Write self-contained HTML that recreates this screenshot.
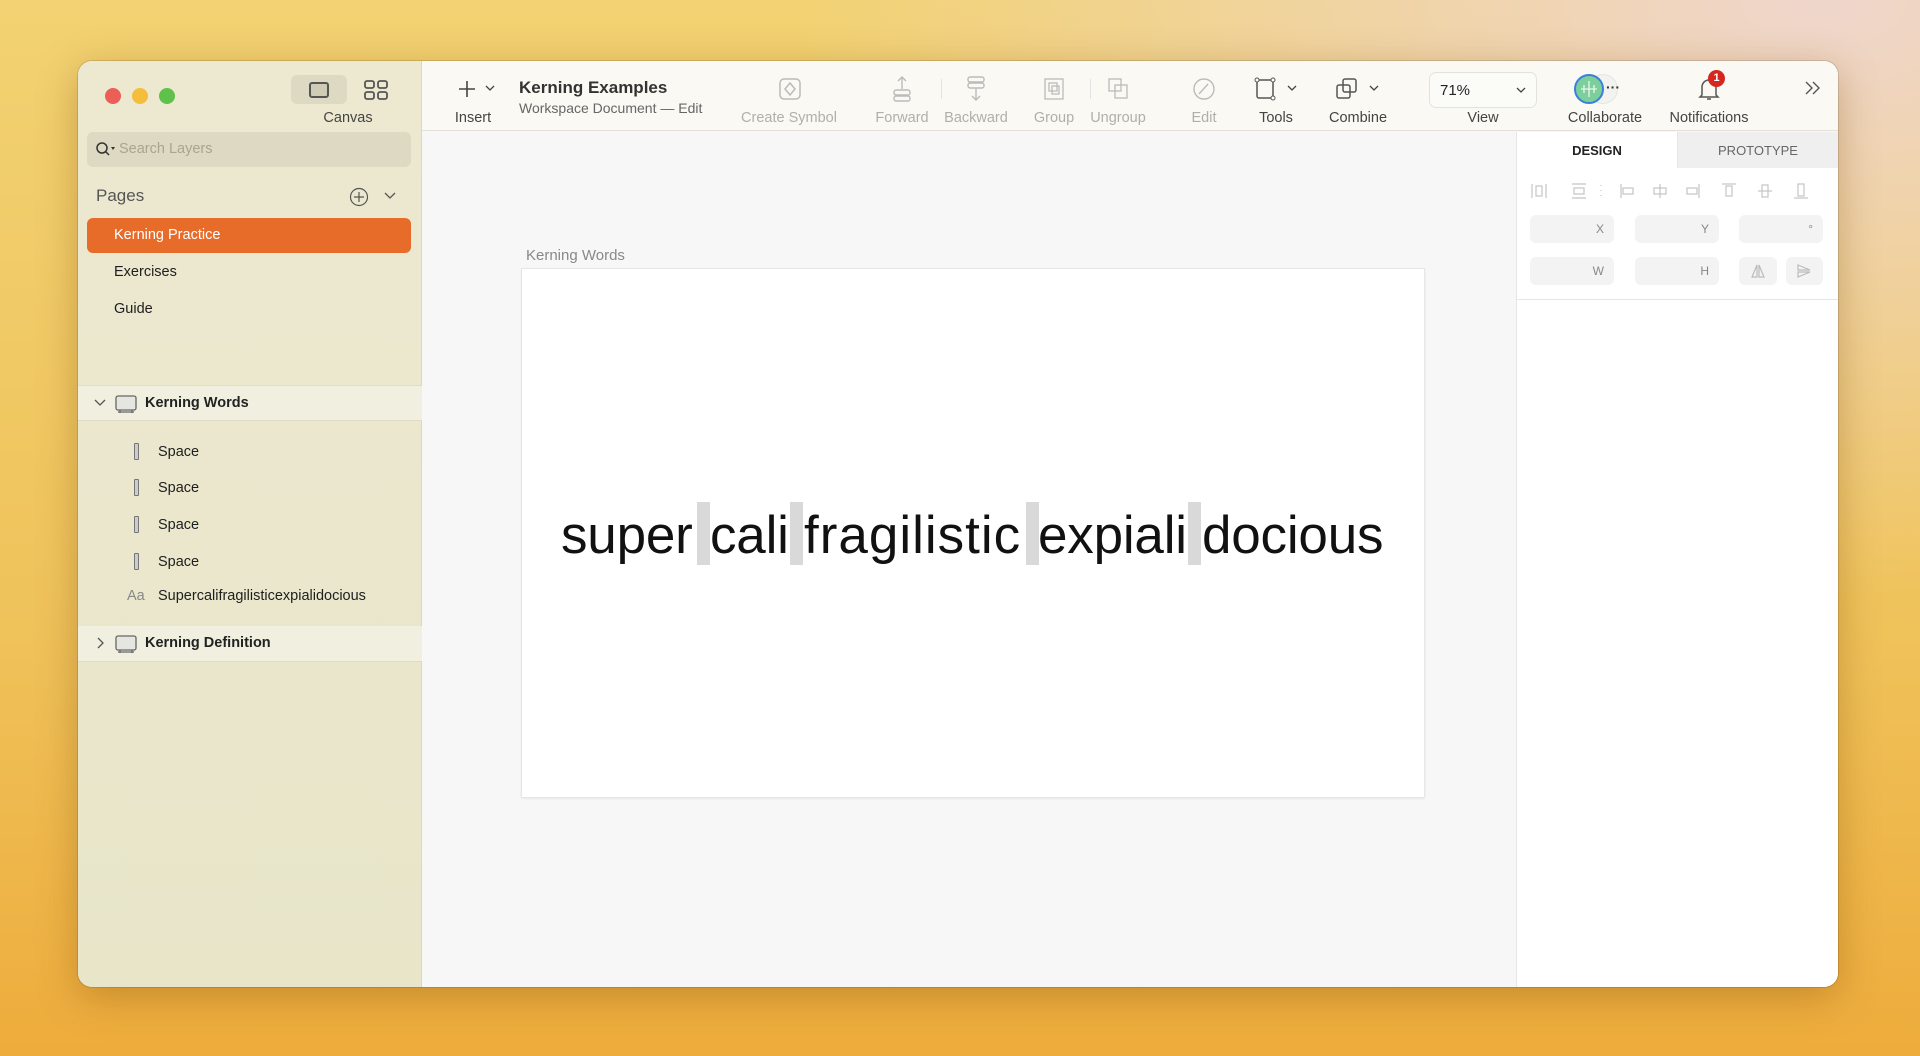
<!DOCTYPE html>
<html><head><meta charset="utf-8"><style>
*{margin:0;padding:0;box-sizing:border-box}
body{width:1920px;height:1056px;overflow:hidden;font-family:"Liberation Sans",sans-serif;position:relative;
background:radial-gradient(ellipse at 95% 0%,#efd6cc 0%,rgba(239,214,204,0) 40%),linear-gradient(180deg,#f2d272 0%,#efc25a 60%,#eeac3c 100%);}
.a{position:absolute}
.win{left:78px;top:61px;width:1760px;height:926px;border-radius:14px;overflow:hidden;background:#f7f7f7;box-shadow:0 10px 40px rgba(120,70,0,.35),0 0 0 1px rgba(0,0,0,.12)}
.side{left:0;top:0;width:344px;height:926px;background:linear-gradient(180deg,#ede9d1,#e8e5c9);border-right:1px solid #dcd8c0}
.tb{left:344px;top:0;width:1416px;height:70px;background:#faf9f3;border-bottom:1px solid #e2e0d8}
.t{font-size:14.5px;color:#222;white-space:nowrap}
.lbl{font-size:14.5px;color:#444;white-space:nowrap;transform:translateX(-50%)}
.dis{color:#b0b0aa}
.tl{width:16px;height:16px;border-radius:50%;top:27px}
.row{font-size:14.5px;color:#1e1e1e;white-space:nowrap}
.sp{width:5px;height:17px;border:1.5px solid #777;border-radius:1px;background:#ccc}
.inp{background:#f3f3f3;border-radius:6px;height:28px;font-size:12px;color:#888;text-align:right;padding:7px 10px 0 0}
.bar{background:#d9d9d9;width:13px;height:63px;top:233px}
.w{font-size:53px;color:#111;top:236px;letter-spacing:-0.2px;line-height:62px}
</style></head><body>
<div class="a win">
 <div class="a side">
  <div class="a tl" style="left:27px;background:#ec5f57"></div>
  <div class="a tl" style="left:54px;background:#f4bd3c"></div>
  <div class="a tl" style="left:81px;background:#5ec14a"></div>
  <div class="a" style="left:213px;top:14px;width:56px;height:29px;background:#ddd9c2;border-radius:6px"></div>
  <div class="a" style="left:231px;top:21px;width:20px;height:16px;border:2px solid #555;border-radius:3px;background:#cfcbb5"></div>
  <svg class="a" style="left:286px;top:19px" width="24" height="20"><g fill="none" stroke="#555" stroke-width="1.8"><rect x="1" y="1" width="9" height="7" rx="2"/><rect x="14" y="1" width="9" height="7" rx="2"/><rect x="1" y="12" width="9" height="7" rx="2"/><rect x="14" y="12" width="9" height="7" rx="2"/></g></svg>
  <div class="a lbl" style="left:270px;top:49px">Canvas</div>
  <div class="a" style="left:9px;top:71px;width:324px;height:35px;background:#ddd9c3;border-radius:6px"></div>
  <svg class="a" style="left:17px;top:80px" width="22" height="16"><circle cx="7" cy="7" r="5" fill="none" stroke="#333" stroke-width="1.5"/><line x1="10.5" y1="10.5" x2="14" y2="14" stroke="#333" stroke-width="1.5"/><path d="M16 6l4 0-2 3z" fill="#333"/></svg>
  <div class="a t" style="left:41px;top:80px;color:#a9a690">Search Layers</div>
  <div class="a" style="left:18px;top:125px;font-size:17px;color:#555">Pages</div>
  <svg class="a" style="left:271px;top:126px" width="20" height="20"><circle cx="10" cy="10" r="8.5" fill="none" stroke="#555" stroke-width="1.2"/><path d="M10 5v10M5 10h10" stroke="#555" stroke-width="1.2"/></svg>
  <svg class="a" style="left:306px;top:130px" width="12" height="10"><path d="M1 2l5 5 5-5" fill="none" stroke="#555" stroke-width="1.3"/></svg>
  <div class="a" style="left:9px;top:157px;width:324px;height:35px;background:#e76b29;border-radius:6px"></div>
  <div class="a row" style="left:36px;top:166px;color:#fff">Kerning Practice</div>
  <div class="a row" style="left:36px;top:203px">Exercises</div>
  <div class="a row" style="left:36px;top:240px">Guide</div>
  <div class="a" style="left:0;top:324px;width:344px;height:36px;background:#f1efe0;border-top:1px solid #e0ddca;border-bottom:1px solid #dedbc6"></div>
  <svg class="a" style="left:16px;top:337px" width="12" height="10"><path d="M1 2l5 5 5-5" fill="none" stroke="#555" stroke-width="1.3"/></svg>
  <svg class="a" style="left:36px;top:332px" width="24" height="22"><rect x="2" y="3" width="20" height="14" rx="2" fill="#e6e6e0" stroke="#666" stroke-width="1.3"/><path d="M6 17v3M18 17v3M4 19h16" stroke="#666" stroke-width="1.2"/></svg>
  <div class="a row" style="left:67px;top:334px;font-weight:bold;color:#222">Kerning Words</div>
  <div class="a sp" style="left:56px;top:382px"></div><div class="a row" style="left:80px;top:383px">Space</div>
  <div class="a sp" style="left:56px;top:418px"></div><div class="a row" style="left:80px;top:419px">Space</div>
  <div class="a sp" style="left:56px;top:455px"></div><div class="a row" style="left:80px;top:456px">Space</div>
  <div class="a sp" style="left:56px;top:492px"></div><div class="a row" style="left:80px;top:493px">Space</div>
  <div class="a row" style="left:49px;top:527px;color:#888">Aa</div><div class="a row" style="left:80px;top:527px">Supercalifragilisticexpialidocious</div>
  <div class="a" style="left:0;top:565px;width:344px;height:36px;background:#f1efe0;border-bottom:1px solid #dedbc6"></div>
  <svg class="a" style="left:18px;top:576px" width="10" height="12"><path d="M2 1l5 5-5 5" fill="none" stroke="#555" stroke-width="1.3"/></svg>
  <svg class="a" style="left:36px;top:572px" width="24" height="22"><rect x="2" y="3" width="20" height="14" rx="2" fill="#e6e6e0" stroke="#666" stroke-width="1.3"/><path d="M6 17v3M18 17v3M4 19h16" stroke="#666" stroke-width="1.2"/></svg>
  <div class="a row" style="left:67px;top:574px;font-weight:bold;color:#222">Kerning Definition</div>
 </div>
 <div class="a tb">
  <svg class="a" style="left:35px;top:18px" width="20" height="20"><path d="M10 2v16M2 10h16" stroke="#444" stroke-width="1.6"/></svg>
  <svg class="a" style="left:63px;top:24px" width="10" height="8"><path d="M1 1l4 4 4-4" fill="none" stroke="#444" stroke-width="1.3"/></svg>
  <div class="a lbl" style="left:51px;top:49px">Insert</div>
  <div class="a" style="left:97px;top:17px;font-size:17px;font-weight:bold;color:#333">Kerning Examples</div>
  <div class="a t" style="left:97px;top:39px;color:#666;font-size:14px">Workspace Document — Edit</div>
  <svg class="a" style="left:356px;top:16px" width="24" height="24"><rect x="2" y="2" width="20" height="20" rx="4" fill="none" stroke="#bbb" stroke-width="1.5"/><path d="M12 6l5 6-5 6-5-6z" fill="none" stroke="#bbb" stroke-width="1.5"/></svg>
  <div class="a lbl dis" style="left:367px;top:49px">Create Symbol</div>
  <svg class="a" style="left:469px;top:14px" width="22" height="28"><path d="M11 2v12M7 6l4-4 4 4" fill="none" stroke="#bbb" stroke-width="1.4"/><rect x="3" y="15" width="16" height="5" rx="2" fill="none" stroke="#bbb" stroke-width="1.4"/><rect x="3" y="21" width="16" height="5" rx="2" fill="none" stroke="#bbb" stroke-width="1.4"/></svg>
  <div class="a" style="left:519px;top:18px;width:1px;height:20px;background:#e3e3e3"></div>
  <div class="a lbl dis" style="left:480px;top:49px">Forward</div>
  <svg class="a" style="left:543px;top:14px" width="22" height="28"><rect x="3" y="2" width="16" height="5" rx="2" fill="none" stroke="#bbb" stroke-width="1.4"/><rect x="3" y="8" width="16" height="5" rx="2" fill="none" stroke="#bbb" stroke-width="1.4"/><path d="M11 13v12M7 21l4 4 4-4" fill="none" stroke="#bbb" stroke-width="1.4"/></svg>
  <div class="a lbl dis" style="left:554px;top:49px">Backward</div>
  <svg class="a" style="left:620px;top:15px" width="24" height="26"><rect x="3" y="3" width="18" height="20" fill="none" stroke="#bbb" stroke-width="1.3"/><rect x="7" y="7" width="8" height="8" fill="none" stroke="#bbb" stroke-width="1.3"/><rect x="10" y="10" width="7" height="8" fill="none" stroke="#bbb" stroke-width="1.3"/></svg>
  <div class="a lbl dis" style="left:632px;top:49px">Group</div>
  <div class="a" style="left:668px;top:18px;width:1px;height:20px;background:#e3e3e3"></div>
  <svg class="a" style="left:684px;top:15px" width="24" height="26"><rect x="3" y="3" width="12" height="12" fill="none" stroke="#bbb" stroke-width="1.3"/><rect x="9" y="9" width="12" height="13" fill="none" stroke="#bbb" stroke-width="1.3"/></svg>
  <div class="a lbl dis" style="left:696px;top:49px">Ungroup</div>
  <svg class="a" style="left:770px;top:16px" width="24" height="24"><circle cx="12" cy="12" r="10" fill="none" stroke="#bbb" stroke-width="1.4"/><path d="M7 17l9-10" stroke="#bbb" stroke-width="1.4"/></svg>
  <div class="a lbl dis" style="left:782px;top:49px">Edit</div>
  <svg class="a" style="left:831px;top:15px" width="26" height="26"><rect x="4" y="4" width="16" height="18" rx="2" fill="none" stroke="#555" stroke-width="1.5"/><circle cx="4" cy="4" r="2" fill="#fff" stroke="#555"/><circle cx="20" cy="4" r="2" fill="#fff" stroke="#555"/><circle cx="20" cy="22" r="2" fill="#fff" stroke="#555"/></svg>
  <svg class="a" style="left:865px;top:24px" width="10" height="8"><path d="M1 1l4 4 4-4" fill="none" stroke="#444" stroke-width="1.3"/></svg>
  <div class="a lbl" style="left:854px;top:49px">Tools</div>
  <svg class="a" style="left:912px;top:15px" width="26" height="26"><rect x="3" y="9" width="13" height="13" rx="2" fill="none" stroke="#555" stroke-width="1.5"/><rect x="9" y="3" width="13" height="13" rx="2" fill="none" stroke="#555" stroke-width="1.5"/></svg>
  <svg class="a" style="left:947px;top:24px" width="10" height="8"><path d="M1 1l4 4 4-4" fill="none" stroke="#444" stroke-width="1.3"/></svg>
  <div class="a lbl" style="left:936px;top:49px">Combine</div>
  <div class="a" style="left:1007px;top:11px;width:108px;height:36px;border:1px solid #e3e3de;border-radius:7px;background:#fbfbf7"></div>
  <div class="a t" style="left:1018px;top:21px;font-size:15px">71%</div>
  <svg class="a" style="left:1094px;top:26px" width="10" height="8"><path d="M1 1l4 4 4-4" fill="none" stroke="#444" stroke-width="1.3"/></svg>
  <div class="a lbl" style="left:1061px;top:49px">View</div>
  <div class="a" style="left:1166px;top:13px;width:30px;height:30px;border-radius:50%;background:#f2f2ee;border:1px solid #e5e5e5"></div>
  <div class="a" style="left:1152px;top:13px;width:30px;height:30px;border-radius:50%;background:#7ccf9a;border:2px solid #3a7fdc"></div>
  <svg class="a" style="left:1158px;top:19px" width="18" height="18"><path d="M9 1v16M4 5v8M14 5v8M1 9h16" stroke="#e8f7ee" stroke-width="1.3"/></svg>
  <div class="a" style="left:1184px;top:18px;font-size:14px;color:#333;font-weight:bold">···</div>
  <div class="a lbl" style="left:1183px;top:49px">Collaborate</div>
  <svg class="a" style="left:1274px;top:15px" width="26" height="26"><path d="M6 19V11a7 7 0 0 1 14 0v8l2 2H4z" fill="none" stroke="#555" stroke-width="1.5"/><path d="M11 23h4" stroke="#555" stroke-width="1.5"/></svg>
  <div class="a" style="left:1286px;top:9px;width:17px;height:17px;border-radius:50%;background:#d7261e;color:#fff;font-size:11px;font-weight:bold;text-align:center;line-height:17px">1</div>
  <div class="a lbl" style="left:1287px;top:49px">Notifications</div>
  <svg class="a" style="left:1382px;top:18px" width="18" height="18"><path d="M2 3l6 6-6 6M9 3l6 6-6 6" fill="none" stroke="#555" stroke-width="1.4"/></svg>
 </div>
 <!-- canvas -->
 <div class="a" style="left:448px;top:186px;font-size:15px;color:#888">Kerning Words</div>
 <div class="a" style="left:444px;top:208px;width:902px;height:528px;background:#fff;box-shadow:0 0 0 1px #e6e6e6,0 1px 3px rgba(0,0,0,.12)">
  <div class="a bar" style="left:175px"></div>
  <div class="a bar" style="left:268px"></div>
  <div class="a bar" style="left:504px"></div>
  <div class="a bar" style="left:666px"></div>
  <div class="a w" style="left:39px">super</div>
  <div class="a w" style="left:188px">cali</div>
  <div class="a w" style="left:282px;letter-spacing:1px">fragilistic</div>
  <div class="a w" style="left:516px">expiali</div>
  <div class="a w" style="left:680px">docious</div>
 </div>
 <!-- right panel -->
 <div class="a" style="left:1438px;top:71px;width:322px;height:855px;background:#fff;border-left:1px solid #e6e6e6">
  <div class="a" style="left:160px;top:0;width:162px;height:36px;background:#efefef;border-left:1px solid #e6e6e6"></div>
  <div class="a" style="left:0;top:11px;width:160px;text-align:center;font-size:13px;font-weight:bold;color:#222">DESIGN</div>
  <div class="a" style="left:160px;top:11px;width:162px;text-align:center;font-size:13px;color:#666">PROTOTYPE</div>
  <svg class="a" style="left:12px;top:49px" width="300" height="20"><g fill="none" stroke="#c4c4c4" stroke-width="1.2">
   <path d="M3 3v14M17 3v14"/><rect x="7" y="5" width="6" height="10"/>
   <path d="M43 3h14M43 17h14"/><rect x="45" y="7" width="10" height="6"/>
   <path d="M72 4v1M72 9v1M72 14v1"/>
   <path d="M92 3v14"/><rect x="94" y="7" width="10" height="6"/>
   <path d="M131 3v14"/><rect x="125" y="7" width="12" height="6"/>
   <path d="M170 3v14"/><rect x="158" y="7" width="10" height="6"/>
   <path d="M193 3h14"/><rect x="197" y="5" width="6" height="10"/>
   <path d="M229 10h14"/><rect x="233" y="4" width="6" height="12"/>
   <path d="M265 17h14"/><rect x="269" y="3" width="6" height="12"/></g></svg>
  <div class="a inp" style="left:13px;top:83px;width:84px">X</div>
  <div class="a inp" style="left:118px;top:83px;width:84px">Y</div>
  <div class="a inp" style="left:222px;top:83px;width:84px">°</div>
  <div class="a inp" style="left:13px;top:125px;width:84px">W</div>
  <div class="a inp" style="left:118px;top:125px;width:84px">H</div>
  <div class="a inp" style="left:222px;top:125px;width:38px"></div>
  <div class="a inp" style="left:269px;top:125px;width:37px"></div>
  <svg class="a" style="left:233px;top:131px" width="16" height="16"><path d="M7 2L2 14h5zM9 2l5 12H9z" fill="none" stroke="#bbb" stroke-width="1.2"/></svg>
  <svg class="a" style="left:279px;top:131px" width="16" height="16"><path d="M2 2l12 5H2zM2 9h12L2 14z" fill="none" stroke="#bbb" stroke-width="1.2"/></svg>
  <div class="a" style="left:0;top:167px;width:322px;height:1px;background:#e6e6e6"></div>
 </div>
</div>
</body></html>
